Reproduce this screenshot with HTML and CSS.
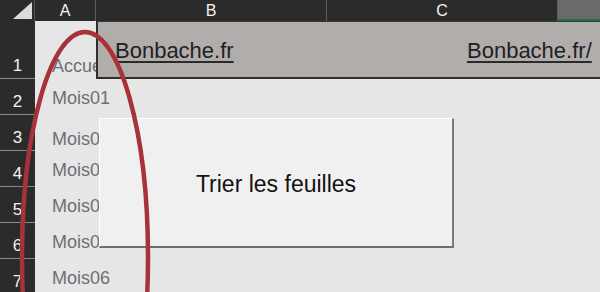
FILE: index.html
```html
<!DOCTYPE html>
<html lang="fr">
<head>
<meta charset="utf-8">
<title>Bonbache</title>
<link rel="stylesheet" href="styles.css">
</head>
<body>
<div class="sheet">
  <div class="colheads">
    <div class="corner">
      <svg class="corner-tri" width="35" height="21" viewBox="0 0 35 21"><polygon points="13,19 32,19 32,2" fill="#dcdcdc"/></svg>
    </div>
    <div class="ch">A</div>
    <div class="ch">B</div>
    <div class="ch">C</div>
    <div class="ch ch-sel"></div>
  </div>
  <div class="body">
    <div class="rowheads">
      <div class="rh rh-tall">1</div>
      <div class="rh">2</div>
      <div class="rh">3</div>
      <div class="rh">4</div>
      <div class="rh">5</div>
      <div class="rh">6</div>
      <div class="rh">7</div>
    </div>
    <div class="cells">
      <div class="row row-tall">
        <div class="cell cell-a cell-bottom">Accueil</div>
        <div class="merged">
          <div class="mcell mcell-b"><span class="link">Bonbache.fr</span></div>
          <div class="mcell mcell-c"><span class="link">Bonbache.fr/</span></div>
        </div>
      </div>
      <div class="row"><div class="cell cell-a">Mois01</div></div>
      <div class="row"><div class="cell cell-a cell-low">Mois02</div></div>
      <div class="row"><div class="cell cell-a">Mois03</div></div>
      <div class="row"><div class="cell cell-a">Mois04</div></div>
      <div class="row"><div class="cell cell-a">Mois05</div></div>
      <div class="row"><div class="cell cell-a">Mois06</div></div>
    </div>
  </div>
  <div class="btn">Trier les feuilles</div>
  <svg class="ring" width="600" height="292" viewBox="0 0 600 292">
    <ellipse cx="85" cy="257" rx="63" ry="225" fill="none" stroke="#a8323a" stroke-width="4.5"/>
  </svg>
</div>
</body>
</html>
```

FILE: styles.css
```css
* { box-sizing: border-box; }
html, body { margin: 0; padding: 0; }
body {
  font-family: "Liberation Sans", Arial, sans-serif;
  background: #e6e6e6;
}
.sheet {
  position: relative;
  width: 600px;
  height: 292px;
  overflow: hidden;
  background: #e6e6e6;
}
.colheads {
  display: grid;
  grid-template-columns: 35px 61px 231px 231px 1fr;
  height: 21px;
  background: #2b2b2b;
}
.corner {
  border-right: 1px solid #555;
}
.corner-tri { display: block; }
.ch {
  display: flex;
  align-items: center;
  justify-content: center;
  color: #f2f2f2;
  font-size: 16px;
  border-right: 1px solid #5c5c5c;
  padding-top: 1px;
}
.ch-sel {
  background: #6a6a6a;
  border-right: none;
  border-bottom: 2px solid #1f7244;
}
.body {
  display: flex;
}
.rowheads {
  width: 35px;
  display: flex;
  flex-direction: column;
  background: #2b2b2b;
}
.rh {
  height: 36px;
  display: flex;
  align-items: flex-end;
  justify-content: center;
  color: #f2f2f2;
  font-size: 17px;
  padding-bottom: 2px;
  border-bottom: 1px solid #8a8a8a;
}
.rh-tall { height: 58px; }
.cells {
  flex: 1;
  display: flex;
  flex-direction: column;
}
.row {
  display: flex;
  height: 36px;
}
.row-tall { height: 58px; }
.cell-a {
  width: 61px;
  flex: none;
  padding-left: 17px;
  padding-top: 3px;
  color: #6f6f72;
  font-size: 18px;
  white-space: nowrap;
  overflow: visible;
  display: flex;
  align-items: center;
}
.cell-bottom {
  align-items: flex-end;
  padding-top: 0;
  padding-bottom: 2px;
  overflow: hidden;
}
.cell-low { padding-top: 13px; }
.merged {
  flex: 1;
  display: flex;
  background: #b1adab;
  border: 2px solid #2e2e2e;
  border-top: 1px solid #3a3a3a;
  border-right: none;
  white-space: nowrap;
  overflow: hidden;
}
.mcell {
  display: flex;
  align-items: center;
  padding-top: 3px;
  color: #1d2126;
  font-size: 22px;
}
.mcell-b {
  width: 229px;
  flex: none;
  padding-left: 17px;
}
.mcell-c {
  flex: 1;
  padding-left: 140px;
}
.link {
  text-decoration: underline;
  text-decoration-thickness: 2px;
  text-underline-offset: 3px;
  text-decoration-color: #2a2a2a;
}
.btn {
  position: absolute;
  left: 99px;
  top: 118px;
  width: 355px;
  height: 130px;
  background: #f0f0f0;
  border-top: 1px solid #ffffff;
  border-left: 1px solid #ffffff;
  border-right: 2px solid #7a7a7a;
  border-bottom: 2px solid #6e6e6e;
  display: flex;
  align-items: center;
  justify-content: center;
  color: #111;
  font-size: 23px;
  padding-top: 4px;
}
.ring {
  position: absolute;
  left: 0;
  top: 0;
  pointer-events: none;
}
```
